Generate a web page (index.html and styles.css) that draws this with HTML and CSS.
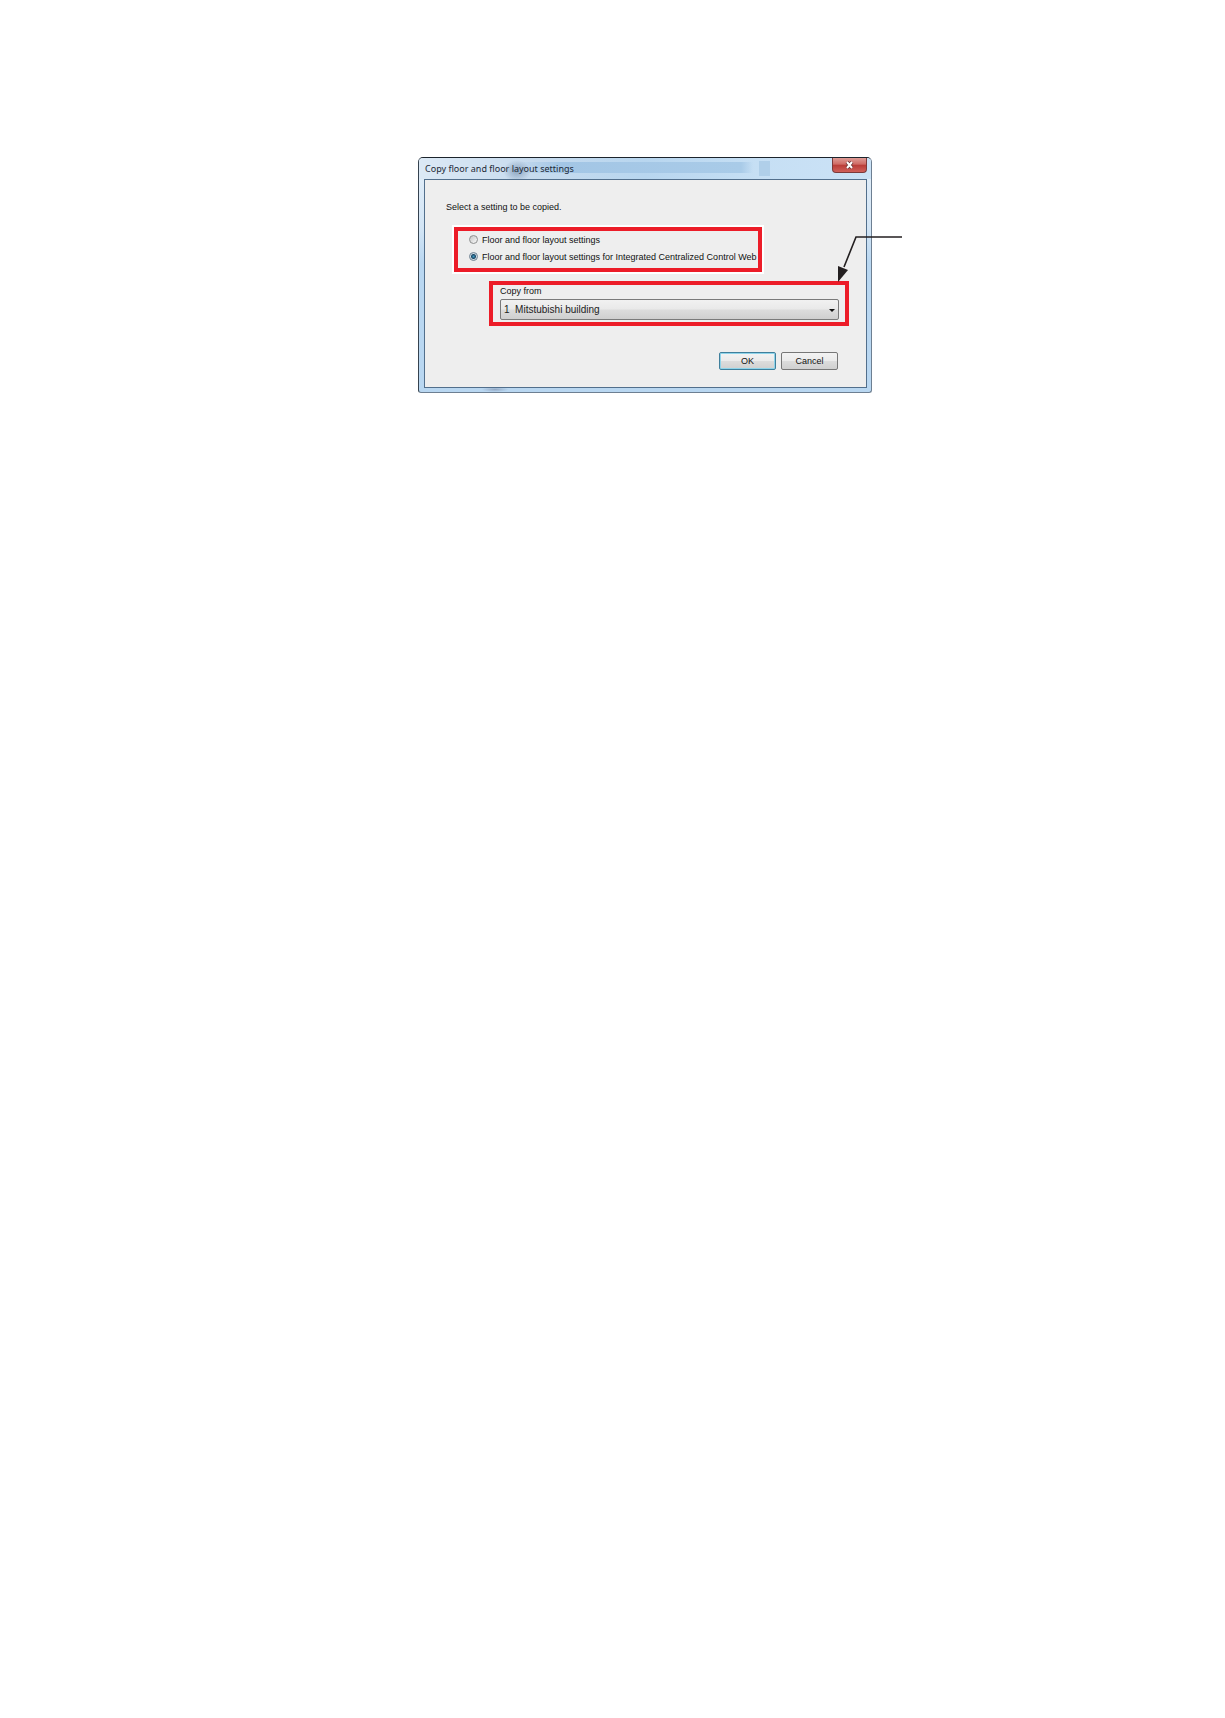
FILE: index.html
```html
<!DOCTYPE html>
<html lang="en">
<head>
    <meta charset="UTF-8">
    <meta name="viewport" content="width=device-width, initial-scale=1.0">
    <title>Copy floor and floor layout settings</title>
    <link rel="stylesheet" href="styles.css">
</head>
<body>

    <main class="page">
        <form class="dialog">
            <header class="titlebar">
                <h1>Copy floor and floor layout settings</h1>
                <button type="button" class="close" aria-label="Close">
                    <svg width="9" height="8" viewBox="0 0 9 8">
                        <path d="M2 1 L7 7 M7 1 L2 7" stroke="#6b3434" stroke-width="3.6"/>
                        <path d="M2 1 L7 7 M7 1 L2 7" stroke="#fff" stroke-width="2"/>
                    </svg>
                </button>
            </header>

            <div class="client">
                <p class="intro">Select a setting to be copied.</p>

                <div class="highlight options">
                    <label class="option">
                        <input type="radio" name="setting" value="floor">
                        Floor and floor layout settings
                    </label>
                    <label class="option">
                        <input type="radio" name="setting" value="web" checked>
                        Floor and floor layout settings for Integrated Centralized Control Web
                    </label>
                </div>

                <div class="highlight source">
                    <label for="copyFrom">Copy from</label>
                    <div class="dropdown">
                        <select id="copyFrom" name="copyFrom">
                            <option>1&nbsp; Mitstubishi building</option>
                        </select>
                        <svg class="caret" width="6" height="3" viewBox="0 0 6 3">
                            <path d="M0 0 H6 L3 3 Z" fill="#111"/>
                        </svg>
                    </div>

                    <!-- callout line pointing at the box -->
                    <svg class="callout" width="66" height="48" viewBox="0 0 66 48">
                        <path d="M65 3 H19 L7 33" fill="none" stroke="#231f20" stroke-width="1.6"/>
                        <path d="M1 48 V32 L11 36 Z" fill="#231f20"/>
                    </svg>
                </div>

                <div class="buttons">
                    <button type="submit" class="btn btn-default">OK</button>
                    <button type="button" class="btn">Cancel</button>
                </div>
            </div>
        </form>
    </main>

</body>
</html>
```

FILE: styles.css
```css
* {
    box-sizing: border-box;
}
body {
    margin: 0;
    background-color: #fff;
    font-family: "Liberation Sans", Arial, sans-serif;
    font-size: 9px;
    line-height: 12px;
    color: #111;
}
.page {
    padding: 157px 0 40px 65px;
}
.dialog {
    max-width: 454px;
    margin: 0 auto;
    padding: 0 4px 4px 5px;
    border: 1px solid #6d7f92;
    border-top-color: #1c242c;
    border-left-color: #35424f;
    border-radius: 5px 5px 3px 3px;
    background:
        radial-gradient(ellipse at center, #94a9c4, transparent 70%) 62px 100% / 28px 5px no-repeat,
        linear-gradient(#e4eff9, #d3e5f5 30%, #b9d7f1 45%, #b9d7f1);
}
.titlebar {
    display: flex;
    justify-content: space-between;
    height: 21px;
    margin: 0 -4px 0 -5px;
    padding: 0 4px 0 6px;
    border-radius: 4px 4px 0 0;
    background:
        radial-gradient(ellipse at center, #8ea6c0, transparent 70%) 84px 2px / 28px 22px no-repeat,
        linear-gradient(90deg, transparent, #a3c6e5 20%, #a9cbe8 95%, transparent) 96px 4px / 238px 11px no-repeat,
        linear-gradient(#b0cfe9, #b0cfe9) 340px 3px / 11px 15px no-repeat,
        linear-gradient(90deg, #dce9f5, #c7dbee 25%, #b8d6ef 50%, #c6dff4 75%, #cbe2f6);
}
.titlebar h1 {
    margin: 0;
    font-family: "Noto Sans", sans-serif;
    font-size: 9px;
    font-weight: normal;
    line-height: 22px;
    color: #1b2836;
}
.close {
    display: flex;
    align-items: center;
    justify-content: center;
    width: 35px;
    height: 15px;
    padding: 0;
    border: 1px solid #7c3a3a;
    border-top: none;
    border-radius: 0 0 4px 4px;
    background: linear-gradient(#df9c96, #cf6a64 45%, #b93c37 50%, #d0605a);
}
.client {
    padding: 21px 18px 17px 21px;
    border: 1px solid #526f8c;
    background-color: #eee;
}
.intro {
    margin: 0 0 14px;
}
.highlight {
    border: 4px solid #ec1c28;
}
.options {
    width: fit-content;
    margin-left: 8px;
    padding: 0 2px 3px 11px;
    box-shadow: 0 0 0 2px #fff;
}
.option {
    display: flex;
    align-items: center;
    gap: 4px;
    height: 17px;
    white-space: nowrap;
}
.option input {
    appearance: none;
    flex: none;
    width: 9px;
    height: 9px;
    margin: 0;
    border: 1px solid #8e8f8f;
    border-radius: 50%;
    background: linear-gradient(135deg, #c4c4c4, #fafafa);
}
.option input:checked {
    border-color: #6f8292;
    background: radial-gradient(circle, #3f9cc4 0, #1c4866 2px, #cfdbe3 3px);
}
.source {
    position: relative;
    margin: 9px -1px 26px 43px;
    padding: 0 6px 2px 7px;
}
.source label {
    display: block;
    height: 14px;
    line-height: 12px;
}
.dropdown {
    position: relative;
}
.dropdown select {
    appearance: none;
    display: block;
    width: 100%;
    height: 21px;
    padding: 0 16px 0 3px;
    border: 1px solid #7a7a7a;
    border-radius: 2px;
    background: linear-gradient(#f1f1f1, #e9e9e9 48%, #dcdcdc 52%, #cfcfcf);
    font-family: inherit;
    font-size: 10px;
    color: #222;
}
.caret {
    position: absolute;
    top: 10px;
    right: 4px;
    pointer-events: none;
}
.callout {
    position: absolute;
    right: -58px;
    bottom: 40px;
}
.buttons {
    display: flex;
    justify-content: flex-end;
    gap: 5px;
    padding-right: 10px;
}
.btn {
    width: 57px;
    height: 18px;
    padding: 0;
    border: 1px solid #777;
    border-radius: 2px;
    background: linear-gradient(#f3f3f3, #ebebeb 48%, #dcdcdc 52%, #d0d0d0);
    font-family: inherit;
    font-size: 9px;
    color: #111;
}
.btn-default {
    border-color: #3f7f9c;
    box-shadow: inset 0 0 0 1px #8fd4ea;
}
```
